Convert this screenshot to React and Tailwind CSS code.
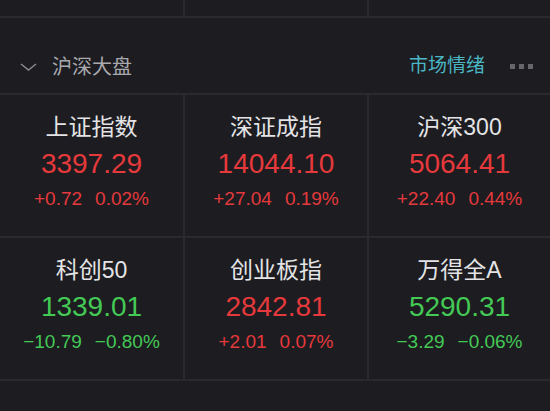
const top = [0, 1, 2];

const rows = [
  [
    { name: "上证指数", price: "3397.29", chg: "+0.72", pct: "0.02%", up: true },
    { name: "深证成指", price: "14044.10", chg: "+27.04", pct: "0.19%", up: true },
    { name: "沪深300", price: "5064.41", chg: "+22.40", pct: "0.44%", up: true },
  ],
  [
    { name: "科创50", price: "1339.01", chg: "−10.79", pct: "−0.80%", up: false },
    { name: "创业板指", price: "2842.81", chg: "+2.01", pct: "0.07%", up: true },
    { name: "万得全A", price: "5290.31", chg: "−3.29", pct: "−0.06%", up: false },
  ],
];

const font = { fontFamily: '"Liberation Sans", "Noto Sans CJK SC", sans-serif' };

function Cell({ item }) {
  const color = item.up ? "text-[#e5393c]" : "text-[#44c955]";
  return (
    <div className="bg-[#1c1c21] h-[141px] flex flex-col items-center pt-[17px]">
      <div className="text-[23px] leading-[30px] text-[#e4e4e6]">{item.name}</div>
      <div className={`mt-[5px] text-[28px] leading-[34px] ${color}`}>{item.price}</div>
      <div className={`mt-[6px] flex gap-[13px] text-[19px] leading-[24px] ${color}`}>
        <span>{item.chg}</span>
        <span>{item.pct}</span>
      </div>
    </div>
  );
}

export default function App() {
  return (
    <div className="w-[550px] h-[411px] bg-[#1c1c21] overflow-hidden" style={font}>
      <div className="grid grid-cols-[183px_182px_1fr] gap-x-[2px] bg-[#2a2a2e] pb-[2px]">
        {top.map((i) => (
          <div key={i} className="h-[16px] bg-[#1c1c21]" />
        ))}
      </div>

      <div className="h-[75px] flex items-center pl-[20px] pr-[17px] pt-[22px]">
        <svg width="17" height="8" viewBox="0 0 17 8" className="shrink-0">
          <path d="M1 1 L8.5 7 L16 1" fill="none" stroke="#8a8a8e" strokeWidth="1.5" />
        </svg>
        <span className="ml-[15px] text-[20px] text-[#a9a9ad]">沪深大盘</span>
        <span className="ml-auto text-[19px] text-[#4bb6c3]">市场情绪</span>
        <div className="ml-[25px] flex gap-[4px]">
          <span className="w-[5px] h-[5px] bg-[#66666b]" />
          <span className="w-[5px] h-[5px] bg-[#66666b]" />
          <span className="w-[5px] h-[5px] bg-[#66666b]" />
        </div>
      </div>

      <div className="grid grid-cols-[183px_182px_1fr] gap-[2px] bg-[#2a2a2e] py-[2px]">
        {rows.flat().map((item) => (
          <Cell key={item.name} item={item} />
        ))}
      </div>
    </div>
  );
}
